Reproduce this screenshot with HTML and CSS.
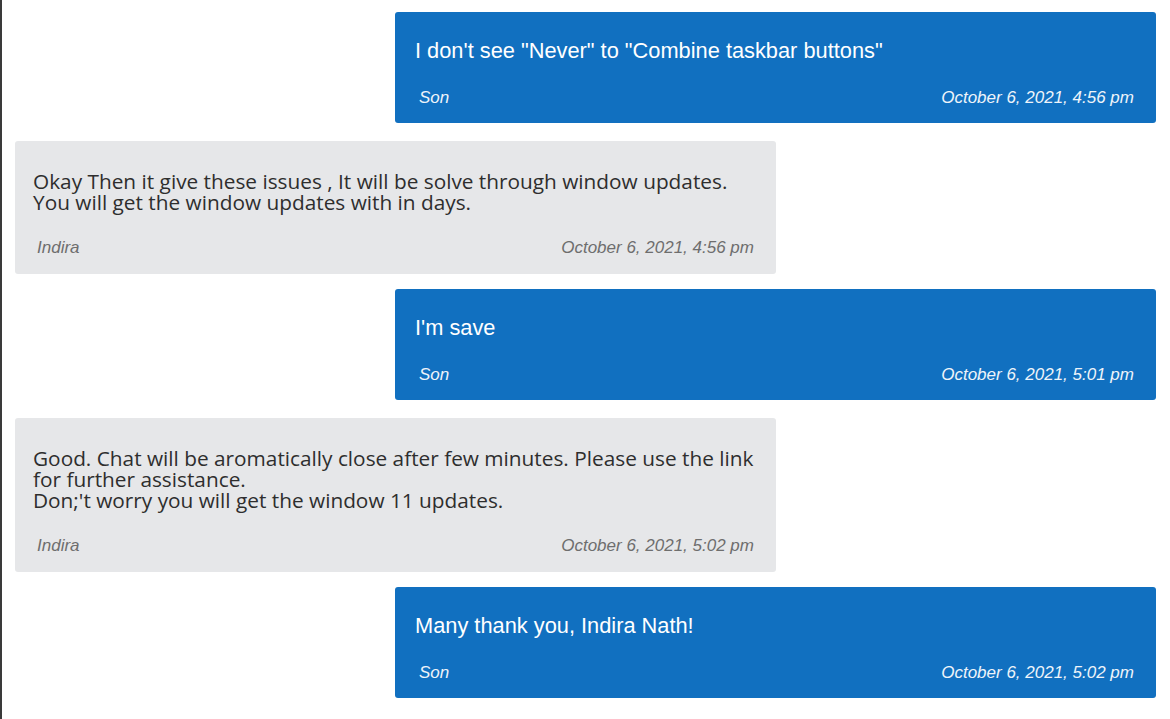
FILE: index.html
```html
<!DOCTYPE html>
<html lang="en">
<head>
<meta charset="utf-8">
<title>Chat transcript</title>
<link rel="stylesheet" href="styles.css">
</head>
<body>
<div class="chat">
  <div class="msg msg-out">
    <div class="msg-text">I don't see "Never" to "Combine taskbar buttons"</div>
    <div class="msg-meta"><span class="msg-name">Son</span><span class="msg-date">October 6, 2021, 4:56 pm</span></div>
  </div>
  <div class="msg msg-in">
    <div class="msg-text">Okay Then it give these issues , It will be solve through window updates.<br>You will get the window updates with in days.</div>
    <div class="msg-meta"><span class="msg-name">Indira</span><span class="msg-date">October 6, 2021, 4:56 pm</span></div>
  </div>
  <div class="msg msg-out">
    <div class="msg-text">I'm save</div>
    <div class="msg-meta"><span class="msg-name">Son</span><span class="msg-date">October 6, 2021, 5:01 pm</span></div>
  </div>
  <div class="msg msg-in">
    <div class="msg-text">Good. Chat will be aromatically close after few minutes. Please use the link for further assistance.<br>Don;'t worry you will get the window 11 updates.</div>
    <div class="msg-meta"><span class="msg-name">Indira</span><span class="msg-date">October 6, 2021, 5:02 pm</span></div>
  </div>
  <div class="msg msg-out">
    <div class="msg-text">Many thank you, Indira Nath!</div>
    <div class="msg-meta"><span class="msg-name">Son</span><span class="msg-date">October 6, 2021, 5:02 pm</span></div>
  </div>
</div>
</body>
</html>
```

FILE: styles.css
```css
html, body {
  margin: 0;
  padding: 0;
  background: #ffffff;
}

body {
  border-left: 2px solid #3a3a3a;
  min-height: 719px;
  box-sizing: border-box;
  font-family: "Liberation Sans", Arial, sans-serif;
}

.chat {
  display: flex;
  flex-direction: column;
  padding: 12px 14px 0 13px;
}

.msg {
  width: 761px;
  box-sizing: border-box;
  border-radius: 3px;
  padding: 0 22px 0 20px;
}

.msg-out {
  align-self: flex-end;
  background: #1170c0;
  color: #ffffff;
  padding-top: 27px;
  padding-bottom: 16px;
  margin-bottom: 18px;
}

.msg-in {
  align-self: flex-start;
  background: #e6e7e9;
  color: #2e2e2e;
  padding-top: 30px;
  padding-bottom: 17px;
  padding-left: 18px;
  margin-bottom: 15px;
}

.msg-out .msg-text {
  font-size: 21.8px;
  line-height: 24px;
}

.msg-in .msg-text {
  font-family: "Open Sans", "Noto Sans", sans-serif;
  font-size: 20.8px;
  line-height: 21px;
  margin-right: -14px;
}

.msg-meta {
  display: flex;
  justify-content: space-between;
  margin-top: 26px;
  padding-left: 4px;
  font-size: 17px;
  line-height: 18px;
  font-style: italic;
}

.msg-in .msg-meta {
  color: #6e6e6e;
}

.msg-out .msg-meta {
  color: #eef4fa;
}
```
